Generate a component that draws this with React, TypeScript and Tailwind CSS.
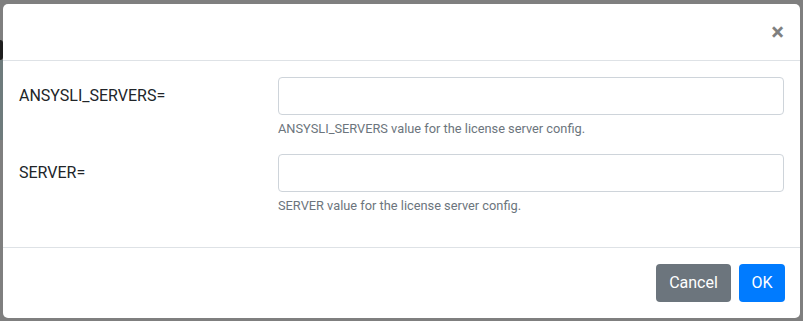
const fields = [
  { name: 'ANSYSLI_SERVERS', help: 'ANSYSLI_SERVERS value for the license server config.' },
  { name: 'SERVER', help: 'SERVER value for the license server config.' },
];

export default function App() {
  return (
    <div
      className="flex h-[321px] w-[803px] overflow-hidden bg-[#7f7f7f] pt-[4px] text-[#212529]"
      style={{ fontFamily: 'Roboto, "Liberation Sans", sans-serif' }}
    >
      {/* page behind the backdrop, barely visible at the left edge */}
      <div className="flex w-[3px] flex-col">
        <div className="h-[36px]" />
        <div className="h-[20px] rounded-r-full bg-[#1e1e1e]" />
        <div className="h-[80px] bg-[#6e7b7c]" />
      </div>

      {/* Modal */}
      <div className="flex h-[314px] w-[797px] flex-col rounded-[5px] bg-white">
        {/* Header */}
        <div className="flex h-[57px] items-center justify-end border-b border-[#dee2e6] px-4">
          <button className="text-[24px] leading-none font-bold text-black/50">×</button>
        </div>

        {/* Body */}
        <div className="flex flex-col px-4 pt-4 pb-4">
          {fields.map((f) => (
            <div key={f.name} className="mb-4 flex">
              <label className="w-[259px] pt-[7px] text-[16px] leading-6">{f.name}=</label>
              <div className="flex w-[506px] flex-col">
                <input
                  type="text"
                  className="h-[38px] rounded-[4px] border border-[#ced4da] bg-white px-3 text-[16px] outline-none"
                />
                <small className="mt-1 text-[12.8px] leading-[19px] text-[#6c757d]">{f.help}</small>
              </div>
            </div>
          ))}
        </div>

        {/* Footer */}
        <div className="flex flex-1 items-start justify-end gap-2 border-t border-[#dee2e6] pr-[15px] pt-[16px]">
          <button className="h-[38px] w-[75px] rounded-[4px] bg-[#6c757d] text-[16px] text-white">Cancel</button>
          <button className="h-[38px] w-[46px] rounded-[4px] bg-[#007bff] text-[16px] text-white">OK</button>
        </div>
      </div>
    </div>
  );
}
